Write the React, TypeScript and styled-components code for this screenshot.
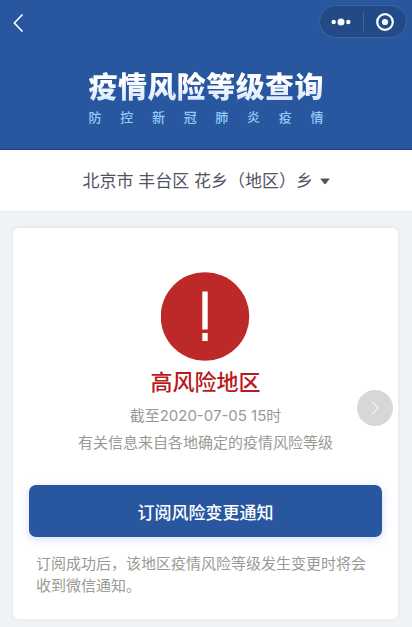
import React from "react";
import styled, { createGlobalStyle } from "styled-components";

const GlobalStyle = createGlobalStyle`
  * { box-sizing: border-box; }
  body {
    margin: 0;
    background: #eff3f6;
    font-family: Inter, "Noto Sans CJK SC", sans-serif;
  }
  h1, h2, p { margin: 0; }
  button, select { font-family: inherit; cursor: pointer; }
`;

const Header = styled.header`
  background: #28579f;
  border-bottom: 1px solid #164391;
  padding-bottom: 22px;
`;

const NavBar = styled.nav`
  display: flex;
  align-items: center;
  justify-content: space-between;
  padding: 5px 5px 0 8px;
`;

const IconButton = styled.button`
  display: flex;
  align-items: center;
  justify-content: center;
  padding: 0;
  border: 0;
  background: none;
  color: #fff;
`;

const BackButton = styled(IconButton)`
  width: 20px;
  height: 32px;
`;

const Capsule = styled.div`
  display: flex;
  align-items: center;
  width: 88px;
  height: 33px;
  border: 1px solid #3d659f;
  border-radius: 17px;
  background: #224a86;
`;

const CapsuleButton = styled(IconButton)`
  flex: 1;
  height: 31px;
`;

const CapsuleDivider = styled.span`
  width: 1px;
  height: 19px;
  background: #3d659f;
`;

const Banner = styled.div`
  width: 235px;
  margin: 32px auto 0;
  text-align-last: justify;
`;

const Title = styled.h1`
  font-size: 29px;
  line-height: 36px;
  font-weight: 900;
  color: transparent;
  background: linear-gradient(#ffffff 30%, #d3e5fc 90%);
  background-clip: text;
  -webkit-background-clip: text;
`;

const Subtitle = styled.p`
  margin-top: 1px;
  font-size: 13px;
  line-height: 20px;
  font-weight: 500;
  color: #92ccf7;
`;

const RegionBar = styled.div`
  display: flex;
  justify-content: center;
  align-items: center;
  height: 62px;
  padding-top: 1px;
  background: #fff;
  border-bottom: 1px solid #e9edf0;
`;

const RegionField = styled.label`
  display: flex;
  align-items: center;
  gap: 6px;
  color: #51535f;
`;

const RegionSelect = styled.select`
  appearance: none;
  padding: 0;
  border: 0;
  background: none;
  color: inherit;
  font-size: 17px;
  line-height: 26px;
`;

const Card = styled.main`
  position: relative;
  margin: 16px 14px 8px 13px;
  padding: 43px 16px 22px;
  border-radius: 6px;
  background: #fff;
  box-shadow: 0 0 4px rgba(60, 90, 120, 0.08);
`;

const Status = styled.section`
  display: flex;
  flex-direction: column;
  align-items: center;
  text-align: center;
`;

const Level = styled.h2`
  margin-top: 5px;
  font-size: 22px;
  line-height: 32px;
  font-weight: 500;
  color: #b9191c;
`;

const Detail = styled.p`
  font-size: 15px;
  line-height: 27px;
  color: #999a93;
`;

const Details = styled.div`
  margin-top: 4px;
`;

const SubscribeButton = styled.button`
  display: block;
  width: 100%;
  height: 52px;
  margin-top: 29px;
  border: 0;
  border-radius: 7px;
  background: #28579f;
  box-shadow: 0 2px 8px rgba(80, 110, 240, 0.25);
  color: #fff;
  font-size: 17px;
  font-weight: 500;
`;

const Note = styled.p`
  margin-top: 16px;
  padding: 0 7px;
  font-size: 15px;
  line-height: 22px;
  color: #999a93;
`;

const NextButton = styled(IconButton)`
  position: absolute;
  top: 162px;
  right: 5px;
  width: 36px;
  height: 36px;
  border-radius: 50%;
  background: #d7d7d7;
`;

export default function App() {
  return (
    <>
      <GlobalStyle />
      <Header>
        <NavBar>
          <BackButton aria-label="返回">
            <svg width="12" height="20" viewBox="0 0 12 20" fill="none" stroke="currentColor" strokeWidth="1.6">
              <path d="M10.5 2.5 2.3 11l8.2 8.5" />
            </svg>
          </BackButton>
          <Capsule>
            <CapsuleButton aria-label="更多">
              <svg width="20" height="8" viewBox="0 0 20 8" fill="currentColor">
                <circle cx="2.7" cy="4" r="2.2" />
                <circle cx="10" cy="4" r="3.5" />
                <circle cx="17.3" cy="4" r="2.2" />
              </svg>
            </CapsuleButton>
            <CapsuleDivider />
            <CapsuleButton aria-label="关闭">
              <svg width="18" height="18" viewBox="0 0 18 18">
                <circle cx="9" cy="9" r="7.8" fill="none" stroke="currentColor" strokeWidth="2.2" />
                <circle cx="9" cy="9" r="3.1" fill="currentColor" />
              </svg>
            </CapsuleButton>
          </Capsule>
        </NavBar>
        <Banner>
          <Title>疫情风险等级查询</Title>
          <Subtitle>防控新冠肺炎疫情</Subtitle>
        </Banner>
      </Header>
      <RegionBar>
        <RegionField>
          <RegionSelect aria-label="地区" defaultValue="huaxiang">
            <option value="huaxiang">北京市 丰台区 花乡（地区）乡</option>
          </RegionSelect>
          <svg width="10" height="7" viewBox="0 0 10 7" fill="currentColor" aria-hidden="true">
            <path d="M1.2.4h7.6q1.2 0 .5.9L5.8 5.8q-.8.9-1.6 0L.7 1.3Q0 .4 1.2.4Z" />
          </svg>
        </RegionField>
      </RegionBar>
      <Card>
        <Status>
          <svg width="90" height="90" viewBox="0 0 90 90" aria-hidden="true">
            <circle cx="44" cy="45.5" r="44.3" fill="#bd2828" />
            <path d="M41.3 20.5h5.4v38h-5.4zM41.3 62h5.4v8h-5.4z" fill="#fff" />
          </svg>
          <Level>高风险地区</Level>
          <Details>
            <Detail>截至2020-07-05 15时</Detail>
            <Detail>有关信息来自各地确定的疫情风险等级</Detail>
          </Details>
        </Status>
        <SubscribeButton>订阅风险变更通知</SubscribeButton>
        <Note>订阅成功后，该地区疫情风险等级发生变更时将会收到微信通知。</Note>
        <NextButton aria-label="下一个">
          <svg width="10" height="16" viewBox="0 0 10 16" fill="none" stroke="#f2f2f2" strokeWidth="1.2">
            <path d="M1.5 1.5 8.5 8l-7 6.5" />
          </svg>
        </NextButton>
      </Card>
    </>
  );
}
